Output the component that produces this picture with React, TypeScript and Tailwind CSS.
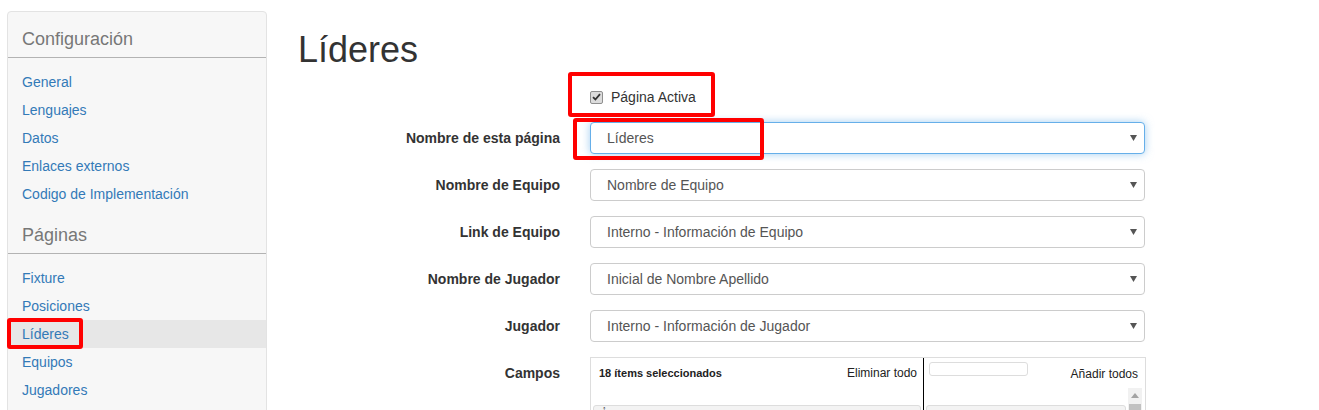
import { ReactNode } from "react";

// --- sidebar data ---
const configLinks = ["General", "Lenguajes", "Datos", "Enlaces externos", "Codigo de Implementación"];
const pageLinks = ["Fixture", "Posiciones", "Líderes", "Equipos", "Jugadores"];

interface SelectRow {
  label: string;
  value: string;
  focused?: boolean;
}

const selectRows: SelectRow[] = [
  { label: "Nombre de esta página", value: "Líderes", focused: true },
  { label: "Nombre de Equipo", value: "Nombre de Equipo" },
  { label: "Link de Equipo", value: "Interno - Información de Equipo" },
  { label: "Nombre de Jugador", value: "Inicial de Nombre Apellido" },
  { label: "Jugador", value: "Interno - Información de Jugador" },
];

function SideHeading({ children, top }: { children: ReactNode; top: string }) {
  return (
    <div className={`${top} border-b border-[#b3b3b3]`}>
      <div className="px-[14px] pb-[6px] text-[18px] leading-[24px] text-[#777]">{children}</div>
    </div>
  );
}

function SideLinks({ items, active }: { items: string[]; active?: string }) {
  return (
    <ul className="mt-[10px] flex flex-col">
      {items.map((item) => (
        <li
          key={item}
          className={`h-[28px] px-[14px] text-[14px] leading-[28px] text-[#337ab7] ${
            item === active ? "bg-[#e7e7e7]" : ""
          }`}
        >
          {item}
        </li>
      ))}
    </ul>
  );
}

function Caret() {
  return (
    <svg width="7" height="6" viewBox="0 0 7 6" className="absolute right-[7px] top-[12px]">
      <polygon points="0,0 7,0 3.5,6" fill="#555" />
    </svg>
  );
}

function FormLabel({ children }: { children: ReactNode }) {
  return (
    <div className="w-[262px] shrink-0 text-right text-[14px] font-bold text-[#333]">{children}</div>
  );
}

export default function App() {
  return (
    <div className="relative h-[410px] w-[1319px] overflow-hidden bg-white font-['Liberation_Sans',Arial,sans-serif]">
      <div className="flex pl-[7px] pt-[11px]">
        {/* Sidebar */}
        <aside className="h-[440px] w-[260px] shrink-0 rounded-[4px] border border-[#e3e3e3] bg-[#f7f7f7]">
          <SideHeading top="pt-[15px]">Configuración</SideHeading>
          <SideLinks items={configLinks} />
          <SideHeading top="pt-[15px]">Páginas</SideHeading>
          <SideLinks items={pageLinks} active="Líderes" />
        </aside>

        {/* Main */}
        <main className="ml-[16px] px-[15px]">
          <h1 className="mt-[19px] text-[36px] leading-[40px] text-[#333]">Líderes</h1>

          {/* checkbox */}
          <div className="mt-[11px] flex h-[32px] items-center">
            <div className="w-[262px] shrink-0" />
            <div className="ml-[30px] flex items-center">
              <span className="flex h-[13px] w-[13px] items-center justify-center rounded-[2px] border border-[#8f8f8f] bg-[#dcdcdc]">
                <svg width="9" height="8" viewBox="0 0 9 8">
                  <path d="M1 4.2 L3.4 6.5 L8 1.2" fill="none" stroke="#333" strokeWidth="1.8" />
                </svg>
              </span>
              <span className="ml-[8px] text-[14px] text-[#333]">Página Activa</span>
            </div>
          </div>

          {/* selects */}
          <div className="mt-[9px] flex flex-col gap-[15px]">
            {selectRows.map((row) => (
              <div key={row.label} className="flex h-[32px] items-center">
                <FormLabel>{row.label}</FormLabel>
                <div
                  className={`relative ml-[30px] h-[32px] w-[555px] rounded-[4px] border bg-white pl-[16px] text-[14px] leading-[30px] text-[#555] ${
                    row.focused
                      ? "border-[#66afe9] shadow-[0_0_8px_rgba(102,175,233,0.6)]"
                      : "border-[#ccc]"
                  }`}
                >
                  {row.value}
                  <Caret />
                </div>
              </div>
            ))}

            {/* multiselect */}
            <div className="flex items-start">
              <div className="w-[262px] shrink-0 pt-[6px] text-right text-[14px] font-bold text-[#333]">Campos</div>
              <div className="ml-[30px] flex h-[80px] w-[556px] border border-[#ddd] text-[11px] font-bold text-[#222]">
                <div className="flex w-[333px] flex-col border-r border-black">
                  <div className="flex h-[30px] items-center justify-between pl-[8px] pr-[6px]">
                    <span>18 ítems seleccionados</span>
                    <span className="text-[12px] font-normal text-[#222]">Eliminar todo</span>
                  </div>
                  <div className="h-[17px]" />
                  <div className="mx-[2px] h-[20px] rounded-t-[3px] border border-[#ddd] bg-[#f3f3f3] pl-[8px] text-[9px] leading-[6px] text-[#333]">
                    ↑
                  </div>
                </div>
                <div className="flex flex-1 flex-col">
                  <div className="flex h-[30px] items-start justify-between pl-[5px] pr-[7px] pt-[4px]">
                    <div className="h-[14px] w-[99px] rounded-[3px] border border-[#ddd]" />
                    <span className="pt-[3px] text-[12px] font-normal text-[#222]">Añadir todos</span>
                  </div>
                  <div className="flex">
                    <div className="flex-1 px-[2px] pt-[17px]">
                      <div className="h-[20px] rounded-t-[3px] border border-[#ddd] bg-[#f3f3f3]" />
                    </div>
                    <div className="mr-[3px] flex w-[14px] flex-col items-center bg-[#f1f1f1]">
                      <svg width="8" height="5" viewBox="0 0 8 5" className="mt-[5px]">
                        <polygon points="0,5 8,5 4,0" fill="#a3a3a3" />
                      </svg>
                      <div className="mt-[6px] h-[20px] w-[12px] bg-[#c1c1c1]" />
                    </div>
                  </div>
                </div>
              </div>
            </div>
          </div>
        </main>
      </div>

      {/* annotation boxes */}
      <div className="absolute left-[7px] top-[318px] h-[31px] w-[76px] rounded-[3px] border-[4px] border-[#f00]" />
      <div className="absolute left-[568px] top-[72px] h-[45px] w-[147px] rounded-[3px] border-[4px] border-[#f00]" />
      <div className="absolute left-[573px] top-[118px] h-[42px] w-[191px] rounded-[3px] border-[4px] border-[#f00]" />
    </div>
  );
}
